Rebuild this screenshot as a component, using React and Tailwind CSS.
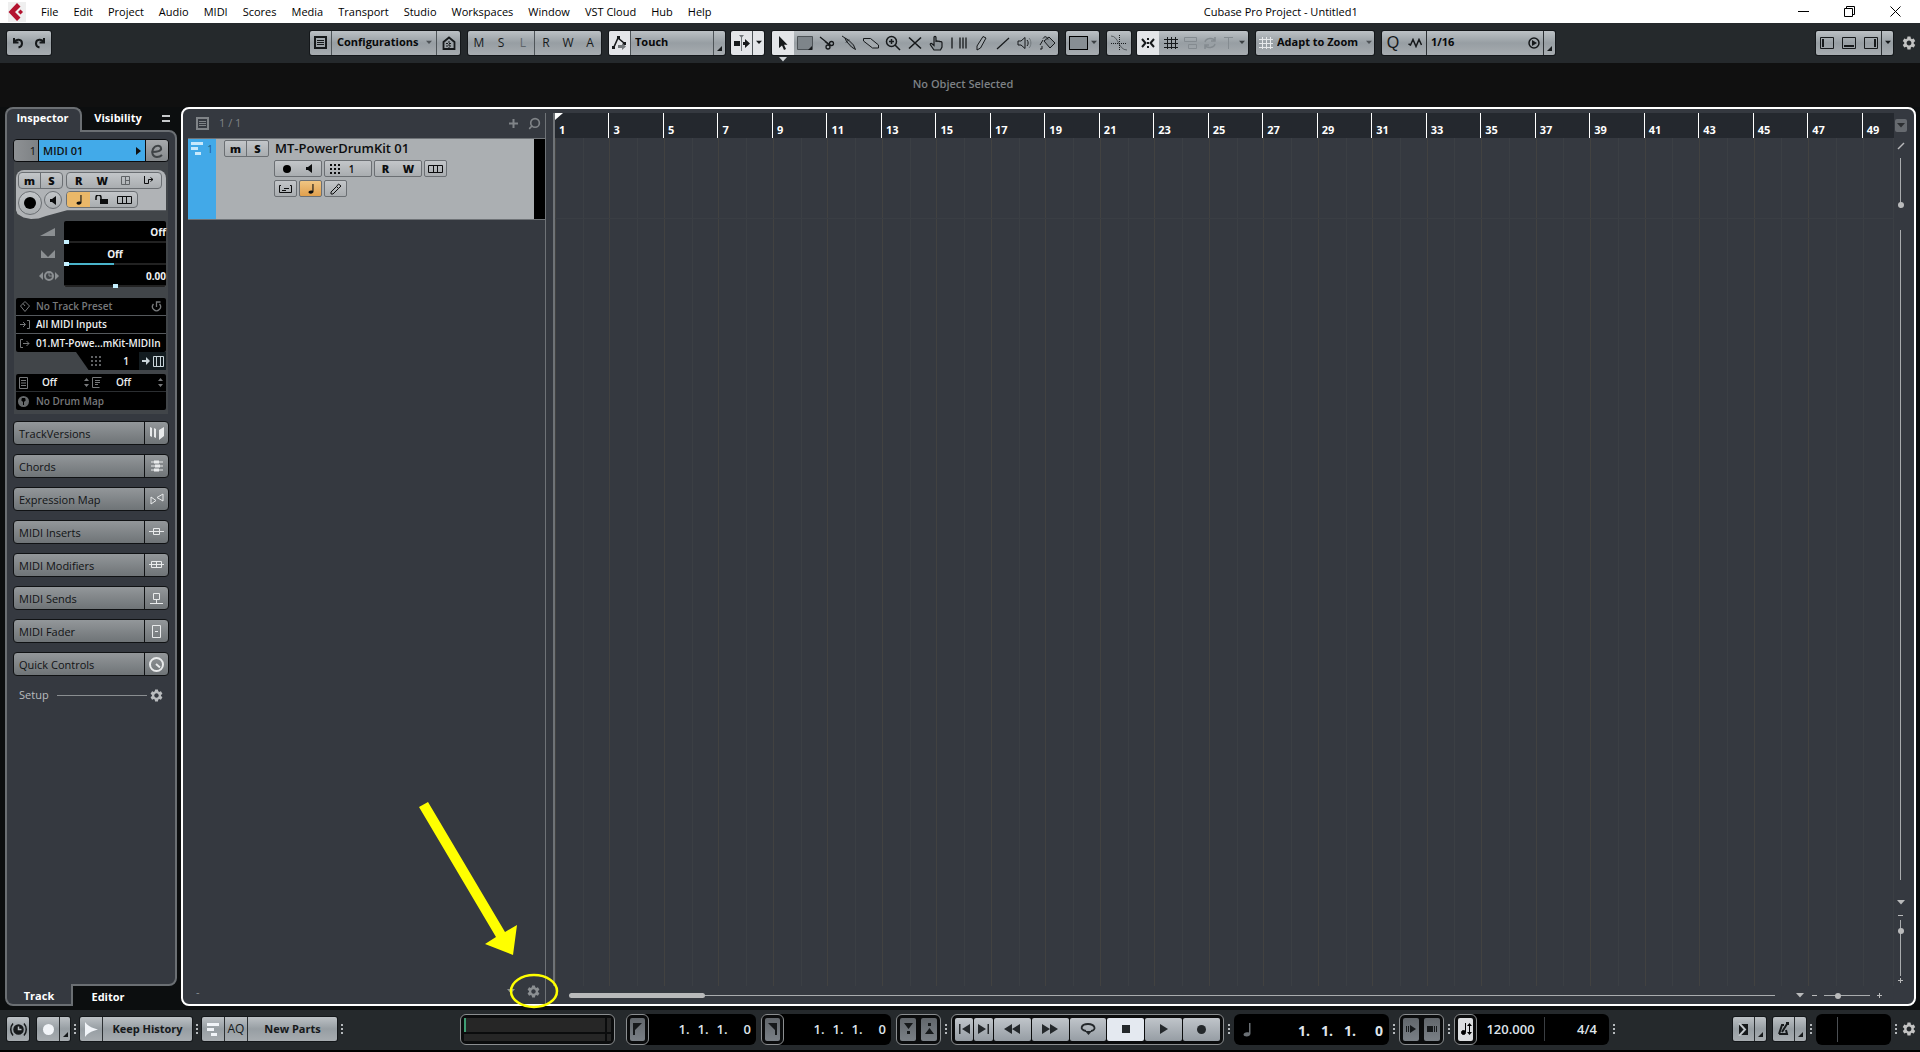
import React from 'react'
import clsx from 'clsx'
import { Search } from 'lucide-react'
import { MdSettings } from 'react-icons/md'

const steel = 'bg-linear-to-b from-[#bcc1c5] via-[#979ea3] to-[#a7acb0]'
const steelFlat = 'bg-linear-to-b from-[#c3c6c9] to-[#a9adb0]'

const menus = ['File', 'Edit', 'Project', 'Audio', 'MIDI', 'Scores', 'Media', 'Transport', 'Studio', 'Workspaces', 'Window', 'VST Cloud', 'Hub', 'Help']

const bars = Array.from({ length: 24 }, (_, i) => i * 2 + 1)

const Icon = ({ w = 16, h = 16, fill = 'none', sw = 1, className, children }) => (
    <svg width={w} height={h} viewBox={`0 0 ${w} ${h}`} fill={fill} stroke="currentColor" strokeWidth={sw} className={clsx('shrink-0', className)} aria-hidden="true">
        {children}
    </svg>
)

const Solid = ({ w = 16, h = 16, className, children }) => (
    <svg width={w} height={h} viewBox={`0 0 ${w} ${h}`} fill="currentColor" className={clsx('shrink-0', className)} aria-hidden="true">
        {children}
    </svg>
)

/* ---------- small shared icons ---------- */

const Down = ({ className }) => <Solid w={8} h={5} className={className}><path d="M0 0h8L4 4.500z" /></Solid>
const Corner = () => <Solid w={5} h={5}><path d="M5 0v5H0z" /></Solid>
const Gear = ({ size = 16, className }) => <MdSettings size={size} className={clsx('shrink-0', className)} />
const Note = ({ className }) => (
    <Solid w={10} h={14} className={className}>
        <path d="M7 0h1.500v10.500c0 1.800-1.800 3-3.800 3S1.500 12.600 1.500 11.500 3 9.200 5 9.200c.8 0 1.500.1 2 .4z" />
    </Solid>
)
const Keys = () => (
    <Icon w={15} h={8}><path d="M.5 .5h14v7H.5zM5.500 .5v7M9.500 .5v7" /></Icon>
)
const Dots3 = () => (
    <Solid w={10} h={10}><path d="M0 0h2v2H0zM4 0h2v2H4zM8 0h2v2H8zM0 4h2v2H0zM4 4h2v2H4zM8 4h2v2H8zM0 8h2v2H0zM4 8h2v2H4zM8 8h2v2H8z" /></Solid>
)
const ListBox = ({ className }) => (
    <Icon w={13} h={13} className={className}><path d="M1 .5v12M12 .5v12M0 1h13M0 12h13" strokeWidth="2" /><path d="M3 4.500h7M3 6.500h7M3 8.500h7" /></Icon>
)
const Speaker = () => <Solid w={7} h={9}><path d="M0 3h2l4-3v9L2 6H0z" /></Solid>
const Parts = () => <Solid w={13} h={14}><path d="M0 1h12v3H0zM0 6h7v3H0zM4 11h6v3H4z" /></Solid>
const GridLines = ({ className }) => (
    <Icon w={14} h={14} className={className}><path d="M3.500 1v12M7.500 1v12M11.500 1v12M0 3.500h14M0 7.500h14M0 11.500h14" /></Icon>
)

const Handle = () => (
    <span className="flex flex-col gap-[2px] px-1 text-[#b5b9bc]">
        <i className="size-[2px] bg-current" />
        <i className="size-[2px] bg-current" />
        <i className="size-[2px] bg-current" />
    </span>
)

const Group = ({ className, children }) => (
    <div className={clsx('flex h-6 items-stretch overflow-hidden rounded-xs text-[#16191b] shadow-[0_0_0_1px_#14171a]', steel, className)}>
        {children}
    </div>
)

const Cell = ({ label, className, children }) => (
    <button type="button" aria-label={label} className={clsx('flex items-center justify-center', className)}>
        {children}
    </button>
)

const Pick = ({ label, value, className }) => (
    <select aria-label={label} defaultValue={value} className={clsx('min-w-0 flex-1 appearance-none bg-transparent text-[11px] font-bold text-[#08090a] outline-none', className)}>
        <option>{value}</option>
    </select>
)

/* ---------- title bar ---------- */

const TitleBar = () => (
    <header className="flex h-[23px] shrink-0 items-center bg-white text-black">
        <svg width="18" height="20" viewBox="0 0 18 20" className="ml-2 shrink-0" aria-hidden="true">
            <rect width="18" height="20" fill="#efefef" />
            <path d="M9 1l3.500 3.500L7 10l5.500 5.500L9 19 .5 10z" fill="#b3122e" />
            <path d="M12.500 7.500L15 10l-2.500 2.500L10 10z" fill="#b3122e" />
        </svg>
        <nav className="flex items-center gap-[15px] pt-px pl-[15px] text-[11px]">
            {menus.map((m) => <a key={m} href="#" className="whitespace-nowrap">{m}</a>)}
        </nav>
        <h1 className="flex-1 pt-px pl-[52px] text-center text-[11px]">Cubase Pro Project - Untitled1</h1>
        <div className="flex items-center gap-[35px] pr-[19px]">
            <Cell label="Minimize"><Icon w={11} h={11}><path d="M0 5.500h11" /></Icon></Cell>
            <Cell label="Restore"><Icon w={11} h={11}><path d="M.5 2.500h8v8h-8zM2.500 2.500v-2h8v8h-2" /></Icon></Cell>
            <Cell label="Close"><Icon w={11} h={11}><path d="M.5 .5l10 10M10.500 .5l-10 10" /></Icon></Cell>
        </div>
    </header>
)

/* ---------- toolbar ---------- */

const tools = [
    ['Object Selection', <Solid><path d="M4 1v12l3-2.500 2 4.500 2-1-2-4.200h3.500z" /></Solid>],
    ['Range Selection', <Icon><path d="M.5 1.500h15v13H.5z" fill="#7e858a" stroke="#4d5357" /><path d="M15 11v4h-4z" fill="currentColor" stroke="none" /></Icon>],
    ['Split', <Icon sw={1.300}><path d="M1 2l10 8M6 6.500l5 4" /><circle cx="12.500" cy="8.500" r="2" /><circle cx="9" cy="12" r="2" /></Icon>],
    ['Glue', <Icon><path d="M1 1l3 2 1.500 3.500 5 5.500 4 2.500-2-4.500-5-5L4 3" fill="#8a9196" /><path d="M8 4.500L5 7.500" /></Icon>],
    ['Erase', <Icon><path d="M.5 3.500h7l8 6.500v3H9.500L.5 6z" fill="#a4aaae" /></Icon>],
    ['Zoom', <Icon sw={1.500}><circle cx="6.500" cy="6.500" r="5" /><path d="M10 10l5 5M4 6.500h5M6.500 4v5" /></Icon>],
    ['Mute', <Icon sw={1.600}><path d="M2 2.500l12 11M14 2.500L2 13.500" /></Icon>],
    ['Comp', <Icon sw={1.200}><path d="M5 15l-3.500-5c-.8-1.500.8-2 1.800-1L5 10.500V2.500c0-1.500 2-1.500 2 0V7c0-1.500 2-1.300 2 0 0-1.300 2-1 2 .3 0-1.200 2-1 2 .5V12l-1.500 3z" fill="#8d9499" /></Icon>],
    ['Time Warp', <Icon sw={1.300}><path d="M1 2.500v11M9 2.500v11M12 2.500v11M15 2.500v11" /></Icon>],
    ['Draw', <Icon><path d="M10 1.500l3 1.500-5.500 10-3.500 2v-4z" fill="#a4aaae" /></Icon>],
    ['Line', <Icon sw={1.200}><path d="M2 14L14 3" /></Icon>],
    ['Play', <Icon><path d="M1 6h3l4-3.500v11L4 10H1zM10 5c1.500 1.500 1.500 4.500 0 6" /><path d="M12 3c2.500 2.500 2.500 7.500 0 10" stroke="#71787c" /></Icon>],
    ['Color', <Icon><path d="M5 6l5-4 6 6-5 5zM4 3.500c2-3 4-2 5 1" fill="#8a9196" /><path d="M4 5l-3 5M1 14h2v-3" /></Icon>],
]

const Toolbar = () => (
    <div className="flex h-10 shrink-0 items-center bg-[#25292c] pr-[3px] pb-px pl-[7px]">
        <Group className="w-11 shrink-0">
            <Cell label="Undo" className="flex-1"><Icon w={12} h={12} sw={2}><path d="M2 1v4.500h4.500M2.500 5C4 2 10 1.500 10 6.500c0 2-1.500 3.500-3.500 4" /></Icon></Cell>
            <Cell label="Redo" className="flex-1"><Icon w={12} h={12} sw={2}><path d="M10 1v4.500H5.500M9.500 5C8 2 2 1.500 2 6.500c0 2 1.500 3.500 3.500 4" /></Icon></Cell>
        </Group>
        <div className="flex items-center gap-2 pl-[259px]">
            <Group className="w-[150px] divide-x divide-[#4e5458]">
                <Cell label="Set up window layout" className="w-[22px]"><ListBox /></Cell>
                <label className="flex flex-1 items-center pr-1 pl-[5px]">
                    <Pick label="Configurations" value="Configurations" />
                    <Down className="w-1.5 text-[#4e5357]" />
                </label>
                <Cell label="Constrain delay compensation" className="w-[23px]"><Icon w={14} h={14} sw={1.800}><path d="M1.500 13V6L7 1.500 12.500 6v7z" /><path d="M4 7.500h6M4 10h6M7 5v7" strokeWidth="1" strokeDasharray="2 1" /></Icon></Cell>
            </Group>
            <Group className="w-[133px] text-xs text-[#2a2e31]">
                {['M', 'S', 'L', 'R', 'W', 'A'].map((l) => (
                    <Cell key={l} className={clsx('flex-1', l === 'L' && 'border-r border-[#4e5458] text-[#5f666a]')}>{l}</Cell>
                ))}
            </Group>
            <div className="flex gap-1.5">
                <Group className="w-[116px]">
                    <Cell label="Automation panel" className="w-[21px] bg-[#e3e5e8]"><Icon sw={1.600}><path d="M1.500 13L6 3l6 5" /><path d="M0 11h3v3H0zM5 1h3v3H5zM11 7h3v3h-3z" fill="currentColor" stroke="none" /><path d="M6 10h4V8l4 3.500-4 3.500v-2H6z" fill="#74797c" stroke="none" /></Icon></Cell>
                    <Pick label="Automation mode" value="Touch" className="border-x border-[#4e5458] pl-1" />
                    <Cell label="Automation options" className="w-[11px] items-end pb-1"><Corner /></Cell>
                </Group>
                <Group className="w-[33px] from-[#e3e5e8] via-[#e3e5e8] to-[#e3e5e8]">
                    <Cell label="Auto-Scroll" className="w-[22px] border-r border-[#4e5458]"><Solid><path d="M7 0h1v16H7zM5 0h5L7.500 3z" fill="#70767a" /><path d="M0 6h6v5H0zM9 7h2V4l5 4.500-5 4.500v-3H9z" /></Solid></Cell>
                    <Cell label="Auto-Scroll settings" className="flex-1"><Down className="w-1.5" /></Cell>
                </Group>
            </div>
            <div className="relative">
                <Group className="w-[286px]">
                    {tools.map(([name, icon], i) => (
                        <Cell key={name} label={name} className={clsx('w-[22px]', i === 0 && 'bg-[#e3e5e8]')}>{icon}</Cell>
                    ))}
                </Group>
                <Down className="absolute top-[26px] left-[7px] text-[#ccd0d4]" />
            </div>
            <Group className="w-[33px]">
                <Cell label="Color menu" className="flex-1 gap-[3px]"><span className="h-[14px] w-[19px] border border-black bg-[#878e93]" /><Down className="w-1.5 text-[#3b4043]" /></Cell>
            </Group>
            <div className="flex gap-1.5">
                <Group className="w-6">
                    <Cell label="Snap to zero crossing" className="flex-1"><Icon><path d="M0 1c8 0 7 14 16 14" stroke="#565c60" /><path d="M8.500 0v16M0 8.500h16" strokeDasharray="1 1" /></Icon></Cell>
                </Group>
                <Group className="w-[111px]">
                    <Cell label="Snap" className="w-[22px] bg-[#e3e5e8]"><Icon w={14} h={14} sw={2}><path d="M1 3l3.500 4L1 11M13 3L9.500 7l3.500 4M7 2v2M7 6v2M7 10v2" /></Icon></Cell>
                    <Cell label="Grid" className="w-6"><GridLines /></Cell>
                    <Cell label="Grid relative" className="w-[15px] text-[#848b90]"><Icon w={14} h={14}><path d="M.5 1.500h12v4H.5zM4.500 8.500h8v4h-8z" /></Icon></Cell>
                    <Cell label="Events" className="w-6 text-[#848b90]"><Icon w={14} h={14} sw={1.500}><path d="M2 6c1-4 8-5 10-1M12 1v4H8M12 8c-1 4-8 5-10 1M2 13V9h4" /></Icon></Cell>
                    <Cell label="Cursor" className="w-[13px] text-[#848b90]"><Icon w={9} h={13}><path d="M0 1.500h9M4.500 2v11" /></Icon></Cell>
                    <Cell label="Snap type" className="flex-1"><Down className="w-1.5 text-[#3b4043]" /></Cell>
                </Group>
            </div>
            <Group className="w-[118px]">
                <label className="flex flex-1 items-center gap-1 pr-0.5 pl-[3px]">
                    <GridLines className="text-[#e6e8ea]" />
                    <Pick label="Grid type" value="Adapt to Zoom" />
                    <Down className="w-1.5 text-[#4e5357]" />
                </label>
            </Group>
            <Group className="w-[173px]">
                <Cell label="Apply quantize" className="w-[22px] font-['Liberation_Sans',sans-serif] text-base leading-none">Q</Cell>
                <Cell label="Iterative quantize" className="w-[23px] border-r border-[#2c3033]"><Icon w={14} h={10} sw={1.500}><path d="M.5 6l2 1L5 1.500l3 7 3-7 2.500 5.500" /></Icon></Cell>
                <Pick label="Quantize preset" value="1/16" className="pl-1" />
                <Cell label="Quantize panel" className="w-5 border-r border-[#2c3033]"><Icon w={12} h={12} sw={1.500}><circle cx="6" cy="6" r="5" /><path d="M4 3l5 3-5 3z" fill="currentColor" stroke="none" /></Icon></Cell>
                <Cell label="Quantize options" className="w-[11px] items-end pb-1"><Corner /></Cell>
            </Group>
        </div>
        <div className="ml-auto flex items-center gap-2">
            <Group className="w-[77px]">
                <Cell label="Left zone" className="w-[22px]"><Icon w={14} h={12}><path d="M.5 .5h13v11H.5z" /><path d="M2 2h2v8H2z" fill="currentColor" stroke="none" /></Icon></Cell>
                <Cell label="Lower zone" className="w-[22px]"><Icon w={14} h={12}><path d="M.5 .5h13v11H.5z" /><path d="M2 8h10v2H2z" fill="currentColor" stroke="none" /></Icon></Cell>
                <Cell label="Right zone" className="w-[22px] border-r border-[#2c3033]"><Icon w={14} h={12}><path d="M.5 .5h13v11H.5z" /><path d="M10 2h2v8h-2z" fill="currentColor" stroke="none" /></Icon></Cell>
                <Cell label="Zone options" className="flex-1"><Down className="w-1.5" /></Cell>
            </Group>
            <Cell label="Toolbar setup" className="text-[#c3c3c3]"><Gear /></Cell>
        </div>
    </div>
)

/* ---------- inspector ---------- */

const sections = [
    ['TrackVersions', <Solid w={14} h={14}><path d="M0 1l2 1v9l-2-1zM4 2l2 1v9l-2-1zM9 4l5-3v9l-5 4z" /></Solid>],
    ['Chords', <Icon w={12} h={12}><path d="M0 2h12M0 6h12M0 10h12" /><path d="M3 .5h5v3H3zM4 4.500h5v3H4zM3 8.500h5v3H3z" fill="currentColor" stroke="none" /></Icon>],
    ['Expression Map', <Icon w={14} h={12}><path d="M1 4v7l5-3.500zM13 1v7L7 4.500z" /></Icon>],
    ['MIDI Inserts', <Icon w={15} h={8}><path d="M0 3.500h15M4.500 .5h6v6h-6z" /></Icon>],
    ['MIDI Modifiers', <Icon w={15} h={8}><path d="M0 3.500h15M2.500 .5h10v6h-10zM7.500 1v5" /></Icon>],
    ['MIDI Sends', <Icon w={13} h={11}><path d="M3.500 .5h6v6h-6zM6.500 7v3M0 10.500h13" /></Icon>],
    ['MIDI Fader', <Icon w={9} h={13}><path d="M.5 .5h8v12h-8zM3 6.500h3" /></Icon>],
    ['Quick Controls', <Icon w={15} h={15} sw={2}><circle cx="7.500" cy="7.500" r="6.500" /><path d="M7 7l4 3.500" /></Icon>],
]

const faders = [
    ['Volume', 'Off', 0, 'text-right', <Solid w={15} h={8}><path d="M15 0v8H0z" /></Solid>],
    ['Pan', 'Off', 0, 'text-center', <Solid w={14} h={8}><path d="M0 0l7 7 7-7v8H0z" /></Solid>],
    ['Delay', '0.00', 50, 'text-right', <Icon w={20} h={10} className="-mr-1"><circle cx="10" cy="5" r="4" strokeWidth="2" /><path d="M10 2v3h3" /><path d="M0 5l4-4v8zM20 5l-4-4v8z" fill="currentColor" stroke="none" /></Icon>],
]

const Stepper = () => (
    <Solid w={7} h={11}><path d="M1 4l2.500-3L6 4zM1 7l2.500 3L6 7z" /></Solid>
)

const Inspector = () => (
    <aside className="flex w-[172px] shrink-0 flex-col text-[#eef0f1]">
        <div className="flex h-[23px] shrink-0 items-stretch text-[11px] font-bold" role="tablist">
            <button type="button" role="tab" aria-selected="true" className="z-10 -mb-0.5 w-[77px] rounded-t-lg border-2 border-b-0 border-[#6b6f73] bg-[#353940] pr-0.5 pb-1 text-white">Inspector</button>
            <button type="button" role="tab" aria-selected="false" className="w-[72px] text-white">Visibility</button>
            <Cell label="Inspector menu" className="flex-1 flex-col gap-[3px]"><i className="h-0.5 w-2 bg-[#c6c8ca]" /><i className="h-0.5 w-2 bg-[#c6c8ca]" /></Cell>
        </div>
        <div className="flex min-h-0 flex-1 flex-col rounded-r-lg border-2 border-[#6b6f73] bg-[#353940] px-1.5 pt-[7px]">
            <div className="flex h-[23px] shrink-0 overflow-hidden rounded border border-[#0b0c0e] text-[#111]">
                <span className="w-6 bg-linear-to-r from-[#8e9194] to-[#7d8184] pr-0.5 text-right text-[11px] leading-[22px]">1</span>
                <button type="button" className="flex flex-1 items-center justify-between border-x border-[#0b0c0e] bg-[#42aae9] pt-px pr-1 pl-1 text-[11px] font-semibold">
                    MIDI 01
                    <Solid w={5} h={8}><path d="M0 0l5 4-5 4z" /></Solid>
                </button>
                <Cell label="Edit channel settings" className="w-[22px] bg-linear-to-b from-[#a6a9ac] to-[#85898c]"><Icon w={14} h={14} sw={2} className="text-[#3f4346]"><path d="M2 8c5 0 10-1 9-4S5 1 3 5s0 8 4 8c2 0 4-1 5-2" /></Icon></Cell>
            </div>
            <div className="mx-px flex shrink-0 flex-col bg-[#414549] px-0.5 pt-2 pb-1">
                <div className="flex h-[49px] flex-col gap-0.5 rounded-lg bg-[#b0b3b6] px-0.5 pt-0.5 [clip-path:polygon(0_0,100%_0,100%_82%,34%_82%,20%_94%,15%_99%,10%_100%,5%_97%,1%_90%,0_82%)]">
                    <div className="flex gap-[3px] text-[11px] font-extrabold text-[#0c0d0e]">
                        <div className={clsx('flex h-[17px] w-[45px] divide-x divide-[#6b6f73] rounded-sm border border-[#6b6f73]', steelFlat)}>
                            <Cell className="flex-1 leading-none">m</Cell>
                            <Cell className="flex-1 leading-none">S</Cell>
                        </div>
                        <div className={clsx('flex h-[17px] w-24 rounded-sm border border-[#6b6f73] leading-none', steelFlat)}>
                            <Cell className="flex-1">R</Cell>
                            <Cell className="flex-1">W</Cell>
                            <Cell label="Open device panels" className="flex-1 text-[#5f6366]"><Icon w={9} h={9}><path d="M.5 .5h8v8h-8zM4.500 0v9M4.500 4.500h4" /></Icon></Cell>
                            <Cell label="Input transformer" className="flex-1"><Icon w={10} h={9}><path d="M.5 0v7.500h4V3.500H9M6.500 1.500l2.500 2-2.500 2" /></Icon></Cell>
                        </div>
                    </div>
                    <div className="flex text-[#0c0d0e]">
                        <Cell label="Record enable" className={clsx('size-6 rounded-full border border-[#6b6f73]', steelFlat)}><span className="size-3 rounded-full bg-black" /></Cell>
                        <Cell label="Monitor" className={clsx('ml-0.5 size-[18px] rounded-full border border-[#6b6f73]', steelFlat)}><Speaker /></Cell>
                        <div className={clsx('ml-1 flex h-[17px] w-[72px] overflow-hidden rounded-sm border border-[#6b6f73]', steelFlat)}>
                            <Cell label="Musical time base" className="w-[23px] bg-[#eab869]"><Note className="h-2.5" /></Cell>
                            <Cell label="Lock" className="w-[22px]"><Solid w={13} h={9}><path d="M5 4h8v5H5z" /><path d="M1 5V2.500a2.500 2.500 0 015 0V4" fill="none" stroke="currentColor" strokeWidth="1.500" /></Solid></Cell>
                            <Cell label="Lanes" className="flex-1"><Keys /></Cell>
                        </div>
                    </div>
                </div>
                <div className="mt-0.5 flex">
                    <div className="flex w-12 flex-col text-[#8b8f92]">
                        {faders.map(([name, , , , icon]) => (
                            <span key={name} className="flex h-[22px] items-center justify-end pr-[9px]">{icon}</span>
                        ))}
                    </div>
                    <div className="flex-1 rounded-xs bg-black text-[10px] font-bold">
                        {faders.map(([name, value, pos, align]) => (
                            <label key={name} className={clsx('relative block h-[22px] leading-[22px]', align)}>
                                {value}
                                {name === 'Pan' && <span className="absolute bottom-0 left-1 h-0.5 w-[46px] bg-[#2fa9c4]" />}
                                <input
                                    type="range" aria-label={name} defaultValue={pos}
                                    className="absolute -bottom-0.5 left-0 h-1.5 w-full appearance-none bg-transparent [&::-webkit-slider-runnable-track]:h-0.5 [&::-webkit-slider-runnable-track]:bg-[#ffffff22] [&::-webkit-slider-thumb]:-mt-px [&::-webkit-slider-thumb]:h-1 [&::-webkit-slider-thumb]:w-[5px] [&::-webkit-slider-thumb]:appearance-none [&::-webkit-slider-thumb]:bg-[#c6f0ff]"
                                />
                            </label>
                        ))}
                    </div>
                </div>
                <div className="mt-[11px] divide-y divide-[#55595d] rounded-xs bg-black text-[10px] font-semibold">
                    <div className="flex h-[18px] items-center gap-1.5 px-1 text-[#77797b]">
                        <Icon w={10} h={11}><path d="M5 .5l4.500 4.500L5 10.500.5 5zM3 2.500l2 2.500" /></Icon>
                        <span className="flex-1">No Track Preset</span>
                        <Icon w={11} h={11} sw={1.300}><path d="M2.500 3a4 4 0 106 0M5.500 6V1h4" /></Icon>
                    </div>
                    <div className="flex h-[18px] items-center gap-1.5 px-1">
                        <Icon w={10} h={9} className="text-[#77797b]"><path d="M0 4.500h5M3 2l2.500 2.500L3 7M7 .5h2.500v8H7" /></Icon>
                        All MIDI Inputs
                    </div>
                    <div className="flex h-[18px] items-center gap-1.5 px-1 whitespace-nowrap">
                        <Icon w={10} h={9} className="text-[#77797b]"><path d="M3 .5H.5v8H3M3 4.500h6M6.500 2L9 4.500 6.500 7" /></Icon>
                        01.MT-Powe...mKit-MIDIIn
                    </div>
                </div>
                <div className="flex h-[18px] items-center self-end bg-black pl-[15px] text-[10px] font-semibold [clip-path:polygon(0_0,100%_0,100%_100%,14%_100%)]">
                    <span className="text-[#5f6163]"><Dots3 /></span>
                    <span className="w-[38px] pl-3 text-center">1</span>
                    <button type="button" aria-label="Edit instrument" className="flex h-full w-[27px] items-center justify-center gap-[3px] bg-[#131c20] text-[#c9d5da]">
                        <Solid w={8} h={8}><path d="M0 3h4V0l4 4-4 4V5H0z" /></Solid>
                        <Icon w={11} h={11}><path d="M.5 .5h10v10H.5zM3.500 1v9M7.500 1v9" /></Icon>
                    </button>
                </div>
                <div className="mt-1 divide-y divide-[#2b2e31] rounded-xs bg-black text-[10px] font-semibold">
                    <div className="flex h-[18px] items-center pr-0.5 pl-[3px] text-[#77797b]">
                        <Icon w={9} h={12}><path d="M.5 .5h8v11h-8zM2 3.500h5M2 6h5M2 8.500h5" /></Icon>
                        <span className="flex-1 pl-[14px] text-[#eef0f1]">Off</span>
                        <Stepper />
                        <Icon w={10} h={11} className="ml-0.5"><path d="M9.500 .5H.5v10h7M3 3.500h5M3 5.500h5M3 7.500h3" /></Icon>
                        <span className="flex-1 pl-[14px] text-[#eef0f1]">Off</span>
                        <Stepper />
                    </div>
                    <div className="flex h-[18px] items-center gap-[7px] pl-0.5 text-[#77797b]">
                        <svg width="11" height="11" viewBox="0 0 11 11" aria-hidden="true"><circle cx="5.500" cy="5.500" r="5.500" fill="#66696b" /><path d="M5.500 9V4M4 2.500h3V5H4z" stroke="#000" fill="#000" /></svg>
                        No Drum Map
                    </div>
                </div>
            </div>
            <div className="mt-[7px] flex flex-col gap-[9px]">
                {sections.map(([name, icon]) => (
                    <button key={name} type="button" className="flex h-6 items-stretch overflow-hidden rounded border border-[#101214] bg-linear-to-b from-[#93979a] to-[#6f7477] text-left text-[11px] text-[#111315]">
                        <span className="flex-1 pl-[5px] leading-6">{name}</span>
                        <span className="flex w-6 items-center justify-center border-l border-[#101214] text-[#e8eaeb]">{icon}</span>
                    </button>
                ))}
            </div>
            <div className="mt-[11px] flex items-center pr-[5px] pl-1.5 text-[11px] text-[#b9bcbe]">
                Setup
                <span className="mr-0.5 ml-2 h-px flex-1 bg-[#8a8e91]" />
                <Cell label="Inspector setup"><Gear size={15} /></Cell>
            </div>
        </div>
        <div className="flex h-5 shrink-0 text-[11px] font-bold text-white" role="tablist">
            <button type="button" role="tab" aria-selected="true" className="z-10 -mt-0.5 w-[68px] rounded-bl-lg border-2 border-t-0 border-[#6b6f73] bg-[#353940] pt-1">Track</button>
            <button type="button" role="tab" aria-selected="false" className="w-[70px] pt-0.5">Editor</button>
        </div>
    </aside>
)

/* ---------- project window ---------- */

const mini = 'flex h-[17px] items-center justify-around rounded-xs border border-[#6b6f73] text-[#0c0d0e] leading-none'

const TrackList = () => (
    <section className="flex w-[363px] shrink-0 flex-col border-r border-[#6f7377] pl-[5px]">
        <div className="flex h-[25px] shrink-0 items-center gap-2.5 pr-1 pb-1 pl-2 text-[11px] text-[#808488]">
            <ListBox />
            <span className="flex-1">1 / 1</span>
            <Cell label="Add track"><Icon w={9} h={9} sw={2}><path d="M4.500 0v9M0 4.500h9" /></Icon></Cell>
            <Cell label="Find track"><Search size={13} strokeWidth={3} className="-scale-x-100" /></Cell>
        </div>
        <div className="flex h-[82px] shrink-0 border-y border-[#6f7377] bg-[#abafb2]">
            <div className="flex w-7 justify-between bg-[#42a9e8] px-[3px] pt-0.5 text-[10px] leading-4 text-[#1c5c86]">
                <span className="text-[#c9e9fb]"><Parts /></span>
                1
            </div>
            <div className="flex flex-1 flex-col gap-[3px] pt-px pl-2">
                <div className="flex items-center gap-1.5">
                    <div className={clsx('flex h-[17px] w-[45px] divide-x divide-[#6b6f73] rounded-xs border border-[#6b6f73] text-[11px] font-extrabold text-[#0c0d0e]', steelFlat)}>
                        <Cell className="flex-1 leading-none">m</Cell>
                        <Cell className="flex-1 leading-none">S</Cell>
                    </div>
                    <span className="text-[13px] leading-[17px] font-semibold text-[#0c0d0e]">MT-PowerDrumKit 01</span>
                </div>
                <div className="flex gap-0.5 pl-[50px] text-[11px] font-extrabold">
                    <div className={clsx(mini, steelFlat, 'w-12')}>
                        <Cell label="Record enable"><span className="size-2 rounded-full bg-black" /></Cell>
                        <Cell label="Monitor"><Speaker /></Cell>
                    </div>
                    <div className={clsx(mini, steelFlat, 'w-12 pr-3')}>
                        <Dots3 />
                        <span className="text-[10px] font-semibold">1</span>
                    </div>
                    <div className={clsx(mini, steelFlat, 'w-12')}>
                        <button type="button">R</button>
                        <button type="button">W</button>
                    </div>
                    <button type="button" aria-label="Lanes" className={clsx(mini, steelFlat, 'w-[23px]')}><Keys /></button>
                </div>
                <div className="flex gap-0.5 pl-[50px]">
                    <button type="button" aria-label="In-place edit" className={clsx(mini, steelFlat, 'w-[23px]')}><Icon w={13} h={8}><path d="M2 .5H.5v7h12v-7H11M3 5.500h4M5 3.500h5" /></Icon></button>
                    <button type="button" aria-label="Time base" className={clsx(mini, 'w-[23px] bg-linear-to-b from-[#f0c583] to-[#e0a04c]')}><Note className="h-2.5" /></button>
                    <button type="button" aria-label="Drum map" className={clsx(mini, steelFlat, 'w-[23px]')}><Icon w={12} h={12}><path d="M1 11v-2l5.500-5.500 2 2L3 11zM6.500 3.500L8.500 1l2.500 2-2.500 2.500" /></Icon></button>
                </div>
            </div>
            <div className="w-[11px] bg-black" />
        </div>
        <div className="mt-auto flex items-center gap-[11px] pb-1 pl-2 text-[11px] text-[#8b8f92]">
            <span className="flex-1">-</span>
            <Down />
            <Cell label="Track controls settings" className="mr-1"><Gear size={15} /></Cell>
        </div>
    </section>
)

const hRange = 'appearance-none bg-transparent [&::-webkit-slider-runnable-track]:h-px [&::-webkit-slider-runnable-track]:bg-[#a9acae] [&::-webkit-slider-thumb]:appearance-none [&::-webkit-slider-thumb]:bg-[#b9babb]'
const vRange = 'w-1.5 appearance-none bg-transparent [writing-mode:vertical-lr] [&::-webkit-slider-runnable-track]:w-px [&::-webkit-slider-runnable-track]:bg-[#a9acae] [&::-webkit-slider-thumb]:-ml-[2px] [&::-webkit-slider-thumb]:size-1.5 [&::-webkit-slider-thumb]:appearance-none [&::-webkit-slider-thumb]:rounded-full [&::-webkit-slider-thumb]:bg-[#b9babb]'

const Plus = () => <Icon w={5} h={5}><path d="M2.500 0v5M0 2.500h5" /></Icon>
const Minus = () => <Icon w={5} h={5}><path d="M0 2.500h5" /></Icon>

const BarMark = ({ n, className }) => (
    <div className={clsx('flex items-end pl-1 text-[11px] leading-4 font-bold text-white', n > 1 && 'border-l border-white', className)}>{n}</div>
)

const EventDisplay = () => (
    <section className="ml-[7px] flex min-w-0 flex-1 flex-col">
        <div className="flex min-h-0 flex-1 flex-col border-l-2 border-[#6f7377]">
            <div className="relative flex h-[25px] shrink-0 bg-[#24282e]">
                {bars.map((n) => <BarMark key={n} n={n} className="flex-20" />)}
                <BarMark n={49} className="flex-11" />
                <Solid w={9} h={8} className="absolute top-0 left-0 text-white"><path d="M0 0h8L0 7z" /></Solid>
            </div>
            <div className="relative flex min-h-0 flex-1">
                {bars.map((n) => (
                    <div key={n} className="flex flex-20 border-l border-[#424241]">
                        <div className="ml-[50%] flex-1 border-l border-[#3b3f44]" />
                    </div>
                ))}
                <div className="flex-11 border-x border-[#3b3f44]" />
                <div className="absolute inset-x-0 top-20 h-px bg-[#3a3e44]" />
            </div>
        </div>
        <div className="flex h-[18px] shrink-0 items-center pl-4 text-[#b9babb]">
            <input type="range" aria-label="Horizontal scroll" defaultValue={0} className={clsx(hRange, 'h-[5px] min-w-0 flex-1 [&::-webkit-slider-thumb]:-mt-[2px] [&::-webkit-slider-thumb]:h-[5px] [&::-webkit-slider-thumb]:w-[136px] [&::-webkit-slider-thumb]:rounded-full')} />
            <div className="flex w-[119px] items-center pl-[21px]">
                <Down />
                <span className="ml-2"><Minus /></span>
                <input type="range" aria-label="Horizontal zoom" defaultValue={28} className={clsx(hRange, 'ml-[7px] h-1.5 w-[46px] [&::-webkit-slider-thumb]:-mt-[2px] [&::-webkit-slider-thumb]:size-1.5 [&::-webkit-slider-thumb]:rounded-full')} />
                <span className="ml-[7px]"><Plus /></span>
            </div>
        </div>
    </section>
)

const ZoomColumn = () => (
    <div className="flex w-5 shrink-0 flex-col items-center pt-2.5 pr-[7px] pb-[21px] text-[#b9babb]">
        <Cell label="Ruler options" className="h-[13px] w-3 rounded-xs bg-[#666a6f] text-[#2b2e31]"><Down /></Cell>
        <Icon w={8} h={8} sw={1.500} className="mt-2.5"><path d="M1 7l6-6" /></Icon>
        <input type="range" aria-label="Waveform zoom" defaultValue={100} className={clsx(vRange, 'mt-2 h-[50px]')} />
        <input type="range" aria-label="Vertical scroll" className={clsx(vRange, 'mt-[22px] min-h-0 flex-1 [&::-webkit-slider-thumb]:opacity-0')} />
        <Down className="mt-5" />
        <span className="mt-2"><Minus /></span>
        <input type="range" aria-label="Vertical zoom" defaultValue={15} className={clsx(vRange, 'mt-0.5 h-14')} />
        <span className="mt-0.5"><Plus /></span>
    </div>
)

/* ---------- transport ---------- */

const Bezel = ({ className, children }) => (
    <div className={clsx('flex h-[31px] items-stretch rounded-md border border-[#8b8e90] bg-[#0b0c0d] p-[3px]', className)}>{children}</div>
)

const slate = 'flex flex-1 items-center justify-center rounded-xs bg-linear-to-b from-[#62676c] to-[#7a8086] text-[#16191b]'

const Locator = ({ name, flag }) => (
    <div className="flex w-[130px] rounded-md bg-black">
        <Bezel className="w-[23px]">
            <button type="button" aria-label={name} className={slate}>
                <Solid w={9} h={12}>{flag === 'l' ? <path d="M0 0h9L2 7v5H0z" /> : <path d="M9 0H0l7 7v5h2z" />}</Solid>
            </button>
        </Bezel>
        <span className="flex flex-1 items-center justify-end gap-2 pt-0.5 pr-[5px] text-[13px] font-semibold text-[#dfe4ea]">
            <span>1.</span><span>1.</span><span>1.</span><span className="pl-2">0</span>
        </span>
    </div>
)

const transport = [
    ['Go to previous marker', <Solid w={11} h={10}><path d="M0 0h1.500v10H0zM11 0v10L3 5z" /></Solid>, 'flex-1'],
    ['Go to next marker', <Solid w={11} h={10}><path d="M9.500 0H11v10H9.500zM0 0l8 5-8 5z" /></Solid>, 'flex-1'],
    ['Rewind', <Solid w={16} h={10}><path d="M8 0v10L0 5zM16 0v10L8 5z" /></Solid>, 'flex-2'],
    ['Forward', <Solid w={16} h={10}><path d="M0 0l8 5-8 5zM8 0l8 5-8 5z" /></Solid>, 'flex-2'],
    ['Cycle', <Icon w={16} h={12} sw={1.800}><path d="M6 8C-1 7 1 1 8 1s9 6 3 7" /><path d="M5 8h7l-3.500 4z" fill="currentColor" stroke="none" /></Icon>, 'flex-2'],
    ['Stop', <Solid w={8} h={8}><path d="M0 0h8v8H0z" /></Solid>, 'flex-2 bg-[#e4e9f0]'],
    ['Start', <Solid w={8} h={10}><path d="M0 0l8 5-8 5z" /></Solid>, 'flex-2'],
    ['Record', <Solid w={9} h={9}><circle cx="4.500" cy="4.500" r="4.500" /></Solid>, 'flex-2'],
]

const TransportBar = () => (
    <footer className="flex h-[42px] shrink-0 items-center border-b-2 border-black bg-[#25292c] pr-[3px] pb-0.5 pl-[7px]">
        <Group className="w-[22px]">
            <Cell label="Activate project" className="flex-1"><Icon w={17} h={15} sw={1.500}><circle cx="8.500" cy="7.500" r="4.500" fill="#16191b" /><path d="M8.500 4.500v3h3" stroke="#b4b9bd" /><path d="M3 1.500C0 5 0 10 3 13.500M14 1.500c3 3.500 3 8.500 0 12" /></Icon></Cell>
        </Group>
        <Group className="ml-2 w-[33px]">
            <Cell label="Record mode" className="w-[23px] border-r border-[#2c3033]"><span className="size-[11px] rounded-full bg-[#f1f4f8]" /></Cell>
            <Cell label="Record options" className="flex-1 items-end pb-1"><Corner /></Cell>
        </Group>
        <Handle />
        <Group className="w-28 text-[11px] font-bold">
            <Cell label="MIDI record mode" className="w-[23px] border-r border-[#2c3033] text-[#f1f4f8]"><Solid w={13} h={15}><path d="M0 0c2 3 6 6 13 7.500C6 9 2 12 0 15z" /></Solid></Cell>
            <Cell className="flex-1 whitespace-nowrap">Keep History</Cell>
        </Group>
        <Handle />
        <Group className="w-[135px] text-[11px] font-bold">
            <Cell label="MIDI parts" className="w-[23px] border-r border-[#2c3033] text-[#f1f4f8]"><Parts /></Cell>
            <Cell className="w-[23px] border-r border-[#2c3033] text-xs font-normal">AQ</Cell>
            <Cell className="flex-1 whitespace-nowrap">New Parts</Cell>
        </Group>
        <Handle />
        <Bezel className="ml-[113px] w-[155px]">
            <div className="grid flex-1 grid-cols-[1fr_4px] grid-rows-[14px_1fr] gap-0.5">
                <span className="border-l-2 border-[#3f9d74] bg-[#262626]" />
                <span className="bg-[#262626]" />
                <span className="bg-[#262626]" />
                <span className="bg-[#262626]" />
            </div>
        </Bezel>
        <div className="ml-[11px] flex gap-[5px]">
            <Locator name="Left locator" flag="l" />
            <Locator name="Right locator" flag="r" />
            <Bezel className="w-[45px] gap-[5px]">
                <button type="button" aria-label="Punch in" className={slate}><Solid w={9} h={12}><path d="M0 0h9L4.500 6zM3 8h3v3H3z" /></Solid></button>
                <button type="button" aria-label="Punch out" className={slate}><Solid w={9} h={12}><path d="M0 11h9L4.500 5zM3 0h3v3H3z" /></Solid></button>
            </Bezel>
        </div>
        <Handle />
        <Bezel className="w-[273px] gap-px">
            {transport.map(([name, icon, cls]) => (
                <button key={name} type="button" aria-label={name} className={clsx('flex basis-0 items-center justify-center rounded-xs text-[#24282b]', cls, name !== 'Stop' && 'bg-linear-to-b from-[#c0c5ca] to-[#969da4]')}>{icon}</button>
            ))}
        </Bezel>
        <Handle />
        <div className="flex h-[31px] w-[155px] items-center rounded-md bg-black pt-0.5 pr-1.5 pl-2 text-[#dfe4ea]">
            <Note className="text-[#6b7075]" />
            <span className="flex flex-1 items-center justify-end gap-[11px] text-[14px] font-bold">
                <span>1.</span><span>1.</span><span>1.</span><span className="pl-2">0</span>
            </span>
        </div>
        <Handle />
        <Bezel className="w-[45px] gap-[5px]">
            <button type="button" aria-label="Pre-roll" className={slate}><Solid w={10} h={8}><path d="M0 1h1v6H0zM2 1h1v6H2zM4 0l6 4-6 4z" /></Solid></button>
            <button type="button" aria-label="Post-roll" className={slate}><Solid w={10} h={6}><path d="M0 0h6v6H0zM7 0h1v6H7zM9 0h1v6H9z" /></Solid></button>
        </Bezel>
        <Handle />
        <div className="flex w-[155px] items-center rounded-md bg-black text-[13px] font-semibold text-[#dfe4ea]">
            <Bezel className="w-[23px]">
                <button type="button" aria-label="Tempo track" className="flex flex-1 items-center justify-center rounded-xs bg-[#dcdee0] text-black"><Icon w={12} h={14}><path d="M5.500 1v9M9.500 2v10" /><circle cx="3.500" cy="10.500" r="2" fill="currentColor" /><path d="M7 4l2.500-3L12 4zM7 10l2.500 3L12 10z" fill="currentColor" stroke="none" /></Icon></button>
            </Bezel>
            <span className="w-[67px] pt-0.5 text-center">120.000</span>
            <span className="flex h-6 flex-1 items-center justify-end border-l border-[#3a3e42] pt-0.5 pr-3">4/4</span>
        </div>
        <Handle />
        <div className="ml-auto flex items-center">
            <Group className="w-[33px]">
                <Cell label="Click pattern" className="w-[22px] border-r border-[#2c3033]"><Solid w={11} h={13}><path d="M1 1h9v11H1z" /><path d="M1 0l6 6.500L1 13" fill="none" stroke="#c0c5c9" strokeWidth="2" /></Solid></Cell>
                <Cell label="Precount options" className="flex-1 items-end pb-1"><Corner /></Cell>
            </Group>
            <Group className="ml-[7px] w-[33px]">
                <Cell label="Metronome" className="w-[22px] border-r border-[#2c3033]"><Icon w={12} h={14} sw={2}><path d="M1 12L4 3h2M1 12h8L8 8M4 10L9 2" /><path d="M8 0h3v3H8z" fill="currentColor" stroke="none" /></Icon></Cell>
                <Cell label="Metronome options" className="flex-1 items-end pb-1"><Corner /></Cell>
            </Group>
            <Handle />
            <div className="h-[31px] w-[75px] rounded-md bg-black py-[3px] pl-[21px]"><span className="block h-full w-px bg-[#4b4f53]" /></div>
            <Handle />
            <Cell label="Transport setup" className="text-[#c3c3c3]"><Gear /></Cell>
        </div>
    </footer>
)

const App = () => (
    <div className="relative flex h-screen flex-col overflow-hidden bg-[#0c0e0f] font-['Open_Sans',sans-serif]">
        <TitleBar />
        <Toolbar />
        <p className="flex h-11 shrink-0 items-center justify-center bg-[#101010] pb-0.5 pl-1.5 text-[11px] font-semibold text-[#7d8185]">No Object Selected</p>
        <main className="flex min-h-0 flex-1 gap-1 pr-1 pb-1 pl-[5px]">
            <Inspector />
            <div className="flex min-w-0 flex-1 rounded-lg border-2 border-white bg-[#353940]">
                <div className="flex min-w-0 flex-1 pt-1">
                    <TrackList />
                    <EventDisplay />
                </div>
                <ZoomColumn />
            </div>
        </main>
        <TransportBar />

        {/* callout pointing at the track controls gear */}
        <svg width="150" height="212" viewBox="415 798 150 212" className="pointer-events-none absolute bottom-[42px] left-[415px]" aria-hidden="true">
            <path d="M419 807l9-5 77 130 12-7-4 30-28-11 11-7z" fill="#ff0" />
            <ellipse cx="534" cy="991" rx="23" ry="16" fill="none" stroke="#ff0" strokeWidth="2.500" />
        </svg>
    </div>
)

export default App
